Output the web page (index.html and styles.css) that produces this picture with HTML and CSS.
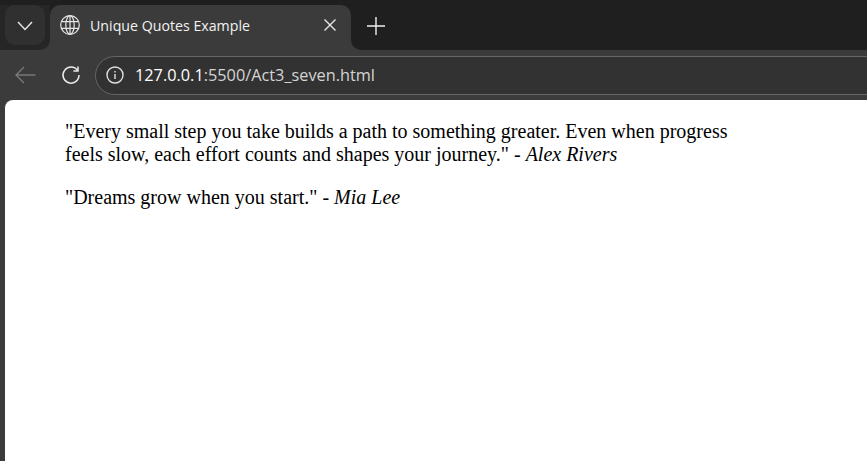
FILE: index.html
```html
<!DOCTYPE html>
<html lang="en">
<head>
    <meta charset="UTF-8">
    <title>Unique Quotes Example</title>
    <link rel="stylesheet" href="styles.css">
</head>
<body>
    <div class="tabstrip">
        <div class="tab-search-wrap">
            <div class="tab-search">
                <svg width="16" height="16" viewBox="0 0 16 16"><path d="M1 5l7 7.5L15 5" fill="none" stroke="#e8e8e8" stroke-width="1.4"/></svg>
            </div>
        </div>
        <div class="tab">
            <svg class="globe" width="20" height="20" viewBox="0 0 20 20" fill="none" stroke="#e6e6e6" stroke-width="1.2">
                <circle cx="10" cy="10" r="9.3"/>
                <ellipse cx="10" cy="10" rx="4.2" ry="9.3"/>
                <path d="M10 .7v18.6M1.5 6.7h17M1.5 13.3h17"/>
            </svg>
            <span class="tab-title">Unique Quotes Example</span>
            <svg class="tab-close" width="12" height="12" viewBox="0 0 12 12"><path d="M.5 .5l11 11M11.5 .5l-11 11" stroke="#e8e8e8" stroke-width="1.4"/></svg>
        </div>
        <div class="tab-rest">
            <svg class="new-tab" width="20" height="20" viewBox="0 0 20 20"><path d="M10 1v18M1 10h18" stroke="#f0f0f0" stroke-width="1.4"/></svg>
        </div>
    </div>
    <div class="toolbar">
        <svg class="nav-icon" width="22" height="18" viewBox="0 0 22 18" fill="none" stroke="#787878" stroke-width="1.4"><path d="M20.5 9H1M9 1L1 9l8 8"/></svg>
        <svg class="nav-icon reload" width="20" height="20" viewBox="0 0 20 20" fill="none" stroke="#ececec" stroke-width="1.5"><path d="M16.6 5.6A8 8 0 1 0 18 10"/><path d="M17 1.5v4.6h-4.6"/></svg>
        <div class="omnibox">
            <svg width="18" height="18" viewBox="0 0 18 18" fill="none" stroke="#e0e0e0" stroke-width="1.4"><circle cx="9" cy="9" r="8"/><path d="M9 8v5M9 5v1.6"/></svg>
            <span class="url"><span class="host">127.0.0.1</span>:5500/Act3_seven.html</span>
        </div>
    </div>
    <div class="viewport">
        <div class="page">
            <p>"Every small step you take builds a path to something greater. Even when progress feels slow, each effort counts and shapes your journey." - <em>Alex Rivers</em></p>
            <p>"Dreams grow when you start." - <em>Mia Lee</em></p>
        </div>
    </div>
</body>
</html>
```

FILE: styles.css
```css
html, body {
    height: 100%;
}
body {
    margin: 0;
    background: #3b3b3b;
    overflow: hidden;
    display: flex;
    flex-direction: column;
}
svg {
    display: block;
    flex: none;
}
.tabstrip {
    height: 50px;
    flex: none;
    background: linear-gradient(#1f1f1f 40px, #3b3b3b 40px);
    display: flex;
    align-items: flex-end;
}
.tab-search-wrap {
    width: 50px;
    height: 45px;
    padding: 0 0 5px 5px;
    box-sizing: border-box;
    background: #262626;
    border-radius: 0 0 10px 0;
}
.tab-search {
    width: 40px;
    height: 40px;
    background: #303030;
    border-radius: 10px;
    display: flex;
    align-items: center;
    justify-content: center;
}
.tab {
    width: 301px;
    height: 45px;
    background: #3b3b3b;
    border-radius: 10px 10px 0 0;
    display: flex;
    align-items: center;
    box-sizing: border-box;
    padding: 0 15px 5px 10px;
}
.tab-title {
    margin-left: 10px;
    flex: 1;
    color: #f2f2f2;
    font-family: "Open Sans", "Noto Sans", sans-serif;
    font-size: 14.2px;
}
.tab-rest {
    flex: 1;
    height: 45px;
    background: #1f1f1f;
    border-radius: 0 0 0 10px;
    box-sizing: border-box;
    padding: 11px 0 0 15px;
}
.toolbar {
    height: 50px;
    flex: none;
    background: #3b3b3b;
    display: flex;
    align-items: center;
    box-sizing: border-box;
    padding-left: 15px;
}
.nav-icon {
    margin-right: 24px;
}
.reload {
    margin-right: 14px;
}
.omnibox {
    flex: 1;
    height: 39px;
    margin-right: -40px;
    background: #323232;
    border: 1px solid #666;
    border-radius: 20px;
    display: flex;
    align-items: center;
    padding-left: 10px;
    box-sizing: border-box;
}
.url {
    margin-left: 11px;
    color: #d4d4d4;
    font-family: "Open Sans", "Noto Sans", sans-serif;
    font-size: 16.3px;
}
.host {
    color: #fff;
}
.viewport {
    flex: 1;
    padding-left: 5px;
}
.page {
    height: 100%;
    background: #fff;
    border-radius: 8px 0 0 0;
    box-sizing: border-box;
    padding: 20px 0 0 60px;
    font-family: "Liberation Serif", serif;
    font-size: 20px;
    line-height: 23px;
    color: #000;
}
.page p {
    margin: 0 0 20px;
    width: 670px;
}
```
